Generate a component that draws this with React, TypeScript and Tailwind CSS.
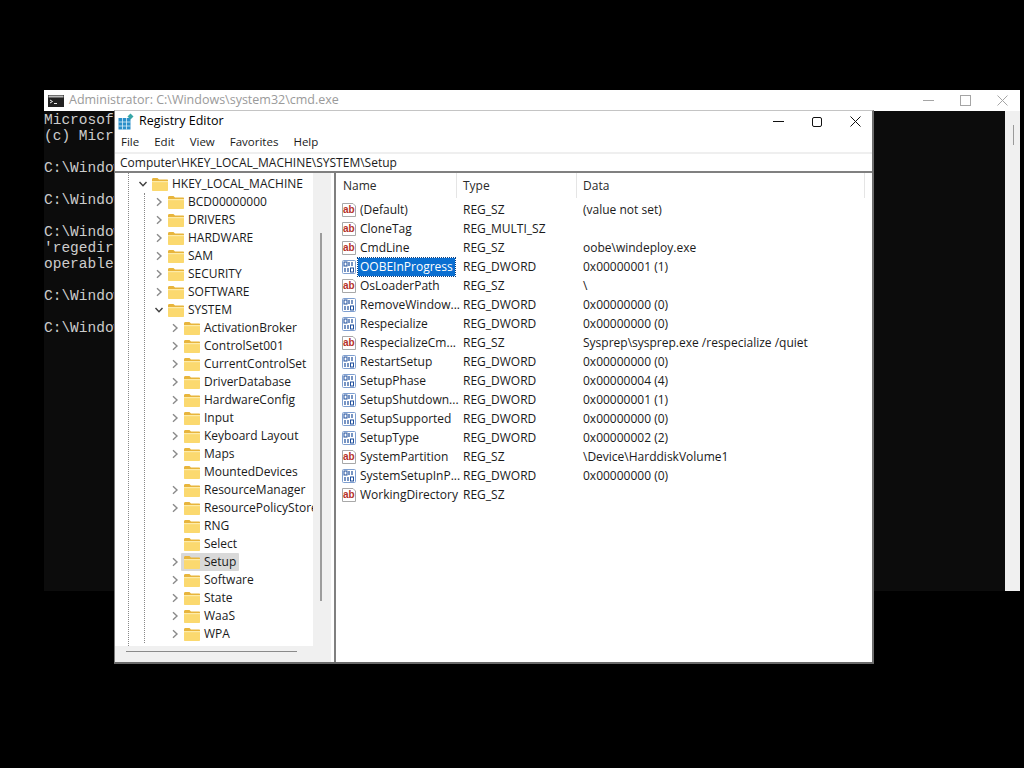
import React from "react";

const sans = { fontFamily: '"Open Sans","Noto Sans",sans-serif' };

function Folder({ className = "" }: { className?: string }) {
  return (
    <svg width="18" height="16" viewBox="0 0 18 16" className={`shrink-0 ${className}`}>
      <path d="M1 3.5C1 2.5 1.6 2 2.5 2H6.5L8 3.6H16C16.7 3.6 17 4 17 4.6V5H1Z" fill="#e8b53c" />
      <path d="M1 5H17V14C17 14.6 16.6 15 16 15H2C1.4 15 1 14.6 1 14Z" fill="#fbd96f" />
      <path d="M1 5H17V6.2H1Z" fill="#fdeba8" />
    </svg>
  );
}

function Chevron({ open }: { open?: boolean }) {
  return (
    <svg width="10" height="10" viewBox="0 0 10 10" className="shrink-0">
      {open ? (
        <path d="M1.5 3L5 6.8L8.5 3" fill="none" stroke="#404040" strokeWidth="1.4" />
      ) : (
        <path d="M3 1.2L7 5L3 8.8" fill="none" stroke="#8a8a8a" strokeWidth="1.4" />
      )}
    </svg>
  );
}

function AbIcon() {
  return (
    <svg width="16" height="16" viewBox="0 0 16 16" className="shrink-0">
      <path d="M1.5 1.5H12L14.5 4V14.5H1.5Z" fill="#fff" stroke="#a8a8a8" />
      <text x="2" y="11" fontSize="10" fontWeight="700" fill="#b5322a" fontFamily='"Liberation Sans",sans-serif'>ab</text>
    </svg>
  );
}

function BinIcon() {
  return (
    <svg width="16" height="16" viewBox="0 0 16 16" className="shrink-0">
      <rect x="1.5" y="1.5" width="13" height="13" rx="1" fill="#fff" stroke="#7f9fd0" />
      <rect x="3" y="3" width="3" height="4" fill="none" stroke="#1f4f9c" />
      <path d="M8 3V7M11 3V7" stroke="#1f4f9c" strokeWidth="1.2" />
      <path d="M4 9V13M7 9V13" stroke="#1f4f9c" strokeWidth="1.2" />
      <rect x="9.5" y="9" width="3" height="4" fill="none" stroke="#1f4f9c" />
    </svg>
  );
}

function RegIcon() {
  return (
    <svg width="16" height="17" viewBox="0 0 16 17" className="shrink-0">
      <rect x="0.5" y="5" width="12" height="11.5" fill="#2a8fc9" />
      <path d="M4.5 5V16.5M8.5 5V16.5M0.5 9H12.5M0.5 13H12.5" stroke="#d8eef8" strokeWidth="0.8" />
      <path d="M12.5 0.5L15.5 3.5L12.5 6.5L9.5 3.5Z" fill="#37a6a6" />
    </svg>
  );
}

const tree: [string, number, "closed" | "open" | "none", boolean?][] = [
  ["BCD00000000", 1, "closed"],
  ["DRIVERS", 1, "closed"],
  ["HARDWARE", 1, "closed"],
  ["SAM", 1, "closed"],
  ["SECURITY", 1, "closed"],
  ["SOFTWARE", 1, "closed"],
  ["SYSTEM", 1, "open"],
  ["ActivationBroker", 2, "closed"],
  ["ControlSet001", 2, "closed"],
  ["CurrentControlSet", 2, "closed"],
  ["DriverDatabase", 2, "closed"],
  ["HardwareConfig", 2, "closed"],
  ["Input", 2, "closed"],
  ["Keyboard Layout", 2, "closed"],
  ["Maps", 2, "closed"],
  ["MountedDevices", 2, "none"],
  ["ResourceManager", 2, "closed"],
  ["ResourcePolicyStore", 2, "closed"],
  ["RNG", 2, "none"],
  ["Select", 2, "none"],
  ["Setup", 2, "closed", true],
  ["Software", 2, "closed"],
  ["State", 2, "closed"],
  ["WaaS", 2, "closed"],
  ["WPA", 2, "closed"],
];

const values: [string, "ab" | "bin", string, string, boolean?][] = [
  ["(Default)", "ab", "REG_SZ", "(value not set)"],
  ["CloneTag", "ab", "REG_MULTI_SZ", ""],
  ["CmdLine", "ab", "REG_SZ", "oobe\\windeploy.exe"],
  ["OOBEInProgress", "bin", "REG_DWORD", "0x00000001 (1)", true],
  ["OsLoaderPath", "ab", "REG_SZ", "\\"],
  ["RemoveWindow...", "bin", "REG_DWORD", "0x00000000 (0)"],
  ["Respecialize", "bin", "REG_DWORD", "0x00000000 (0)"],
  ["RespecializeCm...", "ab", "REG_SZ", "Sysprep\\sysprep.exe /respecialize /quiet"],
  ["RestartSetup", "bin", "REG_DWORD", "0x00000000 (0)"],
  ["SetupPhase", "bin", "REG_DWORD", "0x00000004 (4)"],
  ["SetupShutdown...", "bin", "REG_DWORD", "0x00000001 (1)"],
  ["SetupSupported", "bin", "REG_DWORD", "0x00000000 (0)"],
  ["SetupType", "bin", "REG_DWORD", "0x00000002 (2)"],
  ["SystemPartition", "ab", "REG_SZ", "\\Device\\HarddiskVolume1"],
  ["SystemSetupInP...", "bin", "REG_DWORD", "0x00000000 (0)"],
  ["WorkingDirectory", "ab", "REG_SZ", ""],
];

const consoleLines = [
  "Microsoft Windows",
  "(c) Microsoft Corporation",
  "",
  "C:\\Windows\\system32>",
  "",
  "C:\\Windows\\system32>",
  "",
  "C:\\Windows\\system32>",
  "'regedirt' is not recognized",
  "operable program",
  "",
  "C:\\Windows\\system32>",
  "",
  "C:\\Windows\\system32>",
];

export default function App() {
  return (
    <div className="relative w-[1024px] h-[768px] bg-black overflow-hidden" style={sans}>
      {/* cmd window */}
      <div className="absolute left-[44px] top-[90px] w-[976px] h-[501px] flex flex-col bg-white">
        <div className="h-[21px] flex items-center shrink-0">
          <svg width="16" height="12" viewBox="0 0 16 12" className="ml-[4px] mr-[5px]">
            <rect width="16" height="12" fill="#222" />
            <rect x="0.5" y="0.5" width="15" height="2" fill="#bbb" />
            <path d="M2 5L4.5 6.5L2 8" stroke="#eee" fill="none" />
            <path d="M6 8.5H9" stroke="#eee" />
          </svg>
          <span className="text-[12.5px] text-[#9a9a9a] leading-none">Administrator: C:\Windows\system32\cmd.exe</span>
          <div className="ml-auto flex items-center gap-[26px] pr-[12px]">
            <svg width="11" height="11" viewBox="0 0 11 11"><path d="M0 5.5H11" stroke="#a5a5a5" /></svg>
            <svg width="11" height="11" viewBox="0 0 11 11"><rect x="0.5" y="0.5" width="10" height="10" fill="none" stroke="#a5a5a5" /></svg>
            <svg width="11" height="11" viewBox="0 0 11 11"><path d="M0.5 0.5L10.5 10.5M10.5 0.5L0.5 10.5" stroke="#a5a5a5" /></svg>
          </div>
        </div>
        <div className="flex-1 flex min-h-0">
          <div className="w-[961px] bg-[#0c0c0c] text-[#cccccc] text-[14.5px] leading-[16px] font-['Liberation_Mono',monospace] whitespace-pre pt-[1px]">
            {consoleLines.map((l, i) => (
              <div key={i} className="h-[16px]">{l}</div>
            ))}
          </div>
          <div className="flex-1 bg-[#f0f0f0] relative">
            <div className="absolute left-[8px] top-[14px] w-px h-[20px] bg-[#9a9a9a]" />
          </div>
        </div>
      </div>

      {/* Registry Editor window */}
      <div className="absolute left-[114px] top-[110px] w-[760px] h-[554px] flex flex-col bg-white border-t border-t-[#c4c4c4] border-r-2 border-r-[#6f6f6f] border-b-2 border-b-[#6a6a6a] border-l border-l-[#7a7a7a] text-[12px] text-[#1a1a1a]">
        <div className="h-[21px] flex items-center shrink-0 pl-[3px]">
          <RegIcon />
          <span className="ml-[5px] text-[12.5px] font-medium text-black">Registry Editor</span>
          <div className="ml-auto flex items-center gap-[28px] pr-[11px]">
            <svg width="11" height="11" viewBox="0 0 11 11"><path d="M0 5.5H11" stroke="#111" /></svg>
            <svg width="10" height="10" viewBox="0 0 10 10"><rect x="0.5" y="0.5" width="9" height="9" rx="1.5" fill="none" stroke="#111" /></svg>
            <svg width="11" height="11" viewBox="0 0 11 11"><path d="M0.5 0.5L10.5 10.5M10.5 0.5L0.5 10.5" stroke="#111" /></svg>
          </div>
        </div>
        <div className="h-[20px] flex items-center gap-[15px] pl-[6px] shrink-0 text-[11.5px] bg-white">
          <span>File</span>
          <span>Edit</span>
          <span>View</span>
          <span>Favorites</span>
          <span>Help</span>
        </div>
        <div className="h-[21px] flex items-center pl-[5px] shrink-0 text-[12px] border-t-2 border-t-[#efefef] border-b-2 border-b-[#808080]">
          Computer\HKEY_LOCAL_MACHINE\SYSTEM\Setup
        </div>
        <div className="flex-1 flex min-h-0">
          {/* tree pane */}
          <div className="w-[216px] shrink-0 flex flex-col bg-[#f0f0f0] border-r-0">
            <div className="flex-1 flex min-h-0">
              <div className="w-[198px] bg-white relative overflow-hidden pt-[2px]">
                <div className="absolute left-[13px] top-0 bottom-0 border-l border-dotted border-[#888]" />
                <div className="absolute left-[29px] top-[20px] h-[450px] border-l border-dotted border-[#888]" />
                <div className="h-[18px] flex items-center pl-[23px] relative">
                  <Chevron open />
                  <Folder className="ml-[3px]" />
                  <span className="ml-[3px]">HKEY_LOCAL_MACHINE</span>
                </div>
                {tree.map(([name, depth, state, selected]) => (
                  <div
                    key={name}
                    className={`h-[18px] flex items-center relative ${depth === 1 ? "pl-[39px]" : "pl-[55px]"}`}
                  >
                    {state === "none" ? <span className="w-[10px] shrink-0" /> : <Chevron open={state === "open"} />}
                    <span className={`flex items-center ml-[1px] pl-[2px] pr-[3px] h-[18px] rounded-[1px] ${selected ? "bg-[#d9d9d9]" : ""}`}>
                      <Folder />
                      <span className="ml-[3px] whitespace-nowrap">{name}</span>
                    </span>
                  </div>
                ))}
              </div>
              <div className="flex-1 bg-[#f0f0f0] relative">
                <div className="absolute left-[7px] top-[60px] w-[2px] h-[368px] bg-[#9c9c9c]" />
              </div>
            </div>
            <div className="h-[16px] shrink-0 bg-[#f0f0f0] relative">
              <div className="absolute left-[11px] right-[34px] top-[5px] h-px bg-[#8a8a8a]" />
            </div>
          </div>
          {/* list pane */}
          <div className="flex-1 bg-white border-l-2 border-l-[#808080] ml-[3px] flex flex-col min-h-0 pl-[1px]">
            <div className="h-[25px] flex items-center shrink-0 text-[#2a2a2a] text-[12px]">
              <div className="w-[120px] pl-[6px] h-full flex items-center border-r border-r-[#e5e5e5]">Name</div>
              <div className="w-[120px] pl-[6px] h-full flex items-center border-r border-r-[#e5e5e5]">Type</div>
              <div className="w-[288px] pl-[6px] h-full flex items-center border-r border-r-[#e5e5e5]">Data</div>
            </div>
            <div className="pt-[2px]">
              {values.map(([name, kind, type, data, selected]) => (
                <div key={name} className="h-[19px] flex items-center">
                  <div className="w-[120px] flex items-center pl-[4px] shrink-0">
                    {kind === "ab" ? <AbIcon /> : <BinIcon />}
                    <span className={`ml-[1px] pl-[2px] pr-[2px] h-[18px] leading-[18px] whitespace-nowrap ${selected ? "bg-[#0a6fd1] text-white outline outline-dotted outline-[#0b3f80]" : ""}`}>
                      {name}
                    </span>
                  </div>
                  <div className="w-[120px] pl-[6px] shrink-0">{type}</div>
                  <div className="pl-[6px] whitespace-nowrap">{data}</div>
                </div>
              ))}
            </div>
          </div>
        </div>
      </div>
    </div>
  );
}
